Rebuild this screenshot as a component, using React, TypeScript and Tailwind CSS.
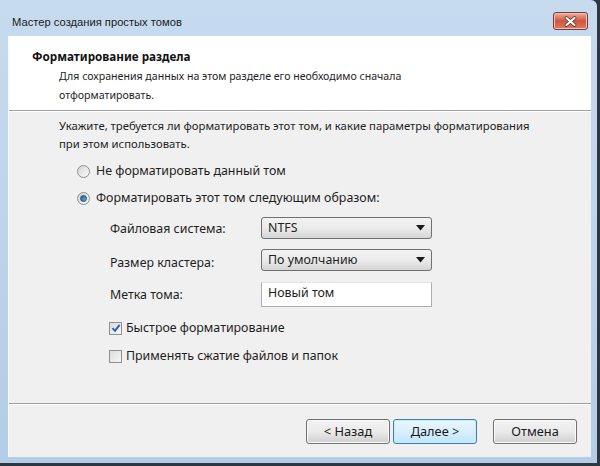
import React from 'react'

// Windows 7 style "New Simple Volume Wizard" — format partition page

const noto = { fontFamily: '"Noto Sans", "Open Sans", sans-serif' }
const arial = { fontFamily: '"Liberation Sans", Arial, sans-serif' }

function Radio({ checked, label }: { checked?: boolean; label: string }) {
  return (
    <div className="h-[17px] flex items-center gap-[6px]">
      <span className="w-[13px] h-[13px] rounded-full border border-[#8e8f8f] bg-gradient-to-br from-[#d4d4d4] to-[#fbfbfb] flex items-center justify-center shrink-0">
        {checked && (
          <span className="w-[7px] h-[7px] rounded-full bg-gradient-to-br from-[#2c628b] to-[#5fb2e6] border border-[#1c4a6c]" />
        )}
      </span>
      <span>{label}</span>
    </div>
  )
}

function Checkbox({ checked, label }: { checked?: boolean; label: string }) {
  return (
    <div className="h-[17px] flex items-center gap-[4px]">
      <span className="w-[13px] h-[13px] border border-[#8e8f8f] bg-gradient-to-br from-[#dcdcdc] to-[#f6f6f6] flex items-center justify-center shrink-0">
        {checked && (
          <svg width="10" height="10" viewBox="0 0 10 10">
            <path d="M1.5 5.2 L4 7.8 L8.6 1.8" fill="none" stroke="#2a5ea8" strokeWidth="1.9" />
          </svg>
        )}
      </span>
      <span>{label}</span>
    </div>
  )
}

function Combo({ value }: { value: string }) {
  return (
    <div className="w-[171px] h-[22px] rounded-[3px] border border-[#707070] bg-gradient-to-b from-[#f2f2f2] via-[#ebebeb] to-[#d5d5d5] flex items-center justify-between pl-[6px] pr-[6px]">
      <span>{value}</span>
      <svg width="9" height="6" viewBox="0 0 9 6">
        <path d="M0 0 H9 L4.5 5.5 Z" fill="#1a1a1a" />
      </svg>
    </div>
  )
}

function Button({ label, primary }: { label: string; primary?: boolean }) {
  return (
    <button
      className={
        primary
          ? 'w-[84px] h-[25px] rounded-[3px] border border-[#3c7fb1] bg-gradient-to-b from-[#eaf6fd] via-[#d9f0fc] to-[#bee6fd] shadow-[inset_0_0_0_1px_#c8eafc] text-[#1a1a1a] text-[12.8px]'
          : 'w-[84px] h-[25px] rounded-[3px] border border-[#707070] bg-gradient-to-b from-[#f2f2f2] via-[#ebebeb] to-[#cfcfcf] shadow-[inset_0_0_0_1px_#fcfcfc] text-[#1a1a1a] text-[12.8px]'
      }
    >
      {label}
    </button>
  )
}

export default function App() {
  return (
    <div className="w-[600px] h-[466px] bg-[#2d3742] overflow-hidden text-[12.4px] text-[#1e1e1e]" style={noto}>
      <div className="w-[597px] h-[463px] rounded-tr-[6px] bg-gradient-to-b from-[#c7dbef] to-[#b3cde6] flex flex-col pl-[8px] pb-[6px] pr-[6px]">
        {/* Title bar */}
        <div className="h-[36px] flex items-start justify-between shrink-0">
          <span className="text-[11.2px] leading-[16px] text-[#1a1a1a] pl-[4px] pt-[14px]" style={arial}>
            Мастер создания простых томов
          </span>
          <div className="w-[35px] h-[18px] mt-[12px] mr-[3px] rounded-[3px] border border-[#7a3b32] bg-gradient-to-b from-[#eab0a3] via-[#d0553e] to-[#d97a66] shadow-[inset_0_0_0_1px_#f2c0b4] flex items-center justify-center">
            <svg width="13" height="11" viewBox="0 0 13 11">
              <path d="M2.5 2 L10.5 9 M10.5 2 L2.5 9" stroke="#5a2a22" strokeWidth="3.6" strokeLinecap="round" />
              <path d="M2.5 2 L10.5 9 M10.5 2 L2.5 9" stroke="#ffffff" strokeWidth="2.2" strokeLinecap="round" />
            </svg>
          </div>
        </div>

        <div className="flex-1 flex flex-col bg-[#f0f0f0] border-l border-[#f7f9fc]">
          {/* Header */}
          <div className="h-[74px] bg-white shrink-0 pt-[12px]">
            <div className="pl-[23px] text-[11.7px] leading-[16px] font-bold text-[#111]">Форматирование раздела</div>
            <div className="pl-[50px] mt-[3px] text-[10.6px] leading-[19px]">
              <div>Для сохранения данных на этом разделе его необходимо сначала</div>
              <div>отформатировать.</div>
            </div>
          </div>
          <div className="h-[2px] border-t border-[#a0a0a0] bg-white shrink-0" />

          {/* Body */}
          <div className="flex-1 flex flex-col pl-[50px] pt-[5px]">
            <div className="text-[11.3px] leading-[18px]">
              <div>Укажите, требуется ли форматировать этот том, и какие параметры форматирования</div>
              <div>при этом использовать.</div>
            </div>
            <div className="pl-[18px] mt-[10px] flex flex-col gap-[10px]">
              <Radio label="Не форматировать данный том" />
              <Radio checked label="Форматировать этот том следующим образом:" />
            </div>
            <div className="pl-[51px] mt-[10px] flex flex-col gap-[9px]">
              <div className="flex items-center">
                <span className="w-[151px] pt-[2px]">Файловая система:</span>
                <Combo value="NTFS" />
              </div>
              <div className="flex items-center">
                <span className="w-[151px] pt-[6px]">Размер кластера:</span>
                <Combo value="По умолчанию" />
              </div>
              <div className="flex items-center">
                <span className="w-[151px] pt-[3px]">Метка тома:</span>
                <div className="w-[171px] h-[25px] bg-white border border-[#abadb3] border-t-[#e3e3e3] pl-[6px] pt-[1px]">
                  Новый том
                </div>
              </div>
            </div>
            <div className="pl-[50px] mt-[13px] flex flex-col gap-[11px]">
              <Checkbox checked label="Быстрое форматирование" />
              <Checkbox label="Применять сжатие файлов и папок" />
            </div>
          </div>

          {/* Footer */}
          <div className="h-[2px] border-t border-[#a0a0a0] bg-white shrink-0" />
          <div className="h-[52px] shrink-0 flex items-start justify-end pr-[14px] pt-[14px]">
            <div className="flex gap-[3px]">
              <Button label="< Назад" />
              <Button primary label="Далее >" />
            </div>
            <div className="ml-[16px]">
              <Button label="Отмена" />
            </div>
          </div>
        </div>
      </div>
    </div>
  )
}
